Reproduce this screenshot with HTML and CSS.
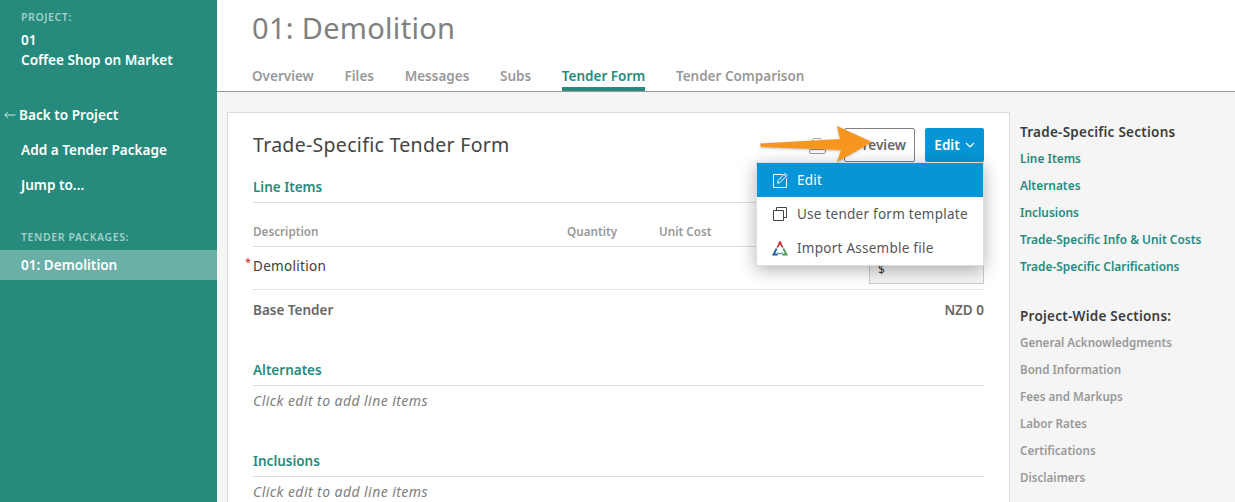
FILE: index.html
```html
<!DOCTYPE html>
<html lang="en">
<head>
<meta charset="utf-8">
<title>Tender Form</title>
<link rel="stylesheet" href="styles.css">
</head>
<body>
<div class="app">
  <aside class="sidebar">
    <div class="side-label first">PROJECT:</div>
    <div class="project">01<br>Coffee Shop on Market</div>
    <nav class="side-nav">
      <a class="back"><svg class="back-ico" width="12" height="8" viewBox="0 0 12 8"><path d="M11.500 4H.8M4 .8.8 4 4 7.200" fill="none" stroke="#cfe5e1" stroke-width="1"/></svg>Back to Project</a>
      <a>Add a Tender Package</a>
      <a>Jump to...</a>
    </nav>
    <div class="side-label second">TENDER PACKAGES:</div>
    <div class="side-active">01: Demolition</div>
  </aside>
  <div class="main">
    <header class="header">
      <h1>01: Demolition</h1>
      <div class="tabs">
        <span>Overview</span><span>Files</span><span>Messages</span><span>Subs</span><span class="active">Tender Form</span><span>Tender Comparison</span>
      </div>
    </header>
    <div class="content">
      <section class="card">
        <div class="card-head">
          <h2>Trade-Specific Tender Form</h2>
          <div class="actions">
            <svg class="clip" width="17" height="16" viewBox="0 0 17 16"><path d="M3.500 1.500q0-1 1-1h7q1 0 1 1v10h-9z" fill="#fff" stroke="#aaa"/><rect x=".5" y="11.500" width="16" height="4" rx="1.500" fill="#fff" stroke="#999"/></svg>
            <button class="btn-outline">Preview</button>
            <button class="btn-primary">Edit<svg width="10" height="6" viewBox="0 0 10 6"><path d="M1 1l4 4 4-4" fill="none" stroke="#fff" stroke-width="1.100"/></svg></button>
          </div>
        </div>
        <h3 class="sec first-sec">Line Items</h3>
        <div class="thead"><span class="c-desc">Description</span><span class="c-qty">Quantity</span><span class="c-cost">Unit Cost</span></div>
        <div class="row-item"><span class="req">*</span>Demolition<span class="input">$</span></div>
        <div class="row-total"><span>Base Tender</span><span>NZD 0</span></div>
        <h3 class="sec alt">Alternates</h3>
        <p class="hint">Click edit to add line items</p>
        <h3 class="sec inc">Inclusions</h3>
        <p class="hint">Click edit to add line items</p>
      </section>
      <aside class="rail">
        <h4>Trade-Specific Sections</h4>
        <a>Line Items</a><a>Alternates</a><a>Inclusions</a><a>Trade-Specific Info &amp; Unit Costs</a><a>Trade-Specific Clarifications</a>
        <h4 class="second-h">Project-Wide Sections:</h4>
        <a class="mute">General Acknowledgments</a><a class="mute">Bond Information</a><a class="mute">Fees and Markups</a><a class="mute">Labor Rates</a><a class="mute">Certifications</a><a class="mute">Disclaimers</a>
      </aside>
    </div>
  </div>
</div>
<div class="menu">
  <div class="menu-item on"><svg width="16" height="16" viewBox="0 0 16 16"><path d="M10.500 2.500H1.500v13h13V6.500" fill="none" stroke="#fff"/><path d="M5.500 11.200l.7-2.800L13 1.300l2 2-6.800 7.100zM11.800 2.600l2 2" fill="none" stroke="#fff"/></svg>Edit</div>
  <div class="menu-item"><svg width="16" height="16" viewBox="0 0 16 16"><path d="M1.500 4.500h10v10h-10z" fill="none" stroke="#444"/><path d="M4.500 4.500v-3h10v10h-3" fill="none" stroke="#444"/></svg>Use tender form template</div>
  <div class="menu-item"><svg width="16" height="16" viewBox="0 0 16 16"><path d="M5.100 7.500 8 3l2.900 4.500" fill="none" stroke="#c9373f" stroke-width="1.600"/><circle cx="8" cy="3" r="1.700" fill="#c9373f"/><path d="M11.300 8.500 14.500 14.500H10.200" fill="none" stroke="#4c9a5a" stroke-width="1.800"/><path d="M4.700 8.500 1.500 14.500H5.800" fill="none" stroke="#1f5f9e" stroke-width="1.800"/><path d="M5.400 12.500a3.300 3.300 0 0 0 5.200 0" fill="none" stroke="#1c6f80" stroke-width="1"/></svg>Import Assemble file</div>
</div>
<svg class="arrow" width="113" height="40" viewBox="0 0 113 40"><path d="M0 19.500 80 15 77 2 112 18 77 38 81 26 1 23z" fill="#f7961e"/></svg>
</body>
</html>
```
FILE: styles.css
```css
* { box-sizing: border-box; }
html, body { margin: 0; height: 100%; overflow: hidden; }
body { font-family: "Noto Sans", "Open Sans", sans-serif; color: #3c3c3c; background: #f5f5f5; }
h1, h2, h3, h4, p { margin: 0; font-weight: 600; }
.app { display: flex; height: 502px; }

.sidebar { width: 217px; flex: none; background: #268b7d; color: #fff; font-weight: 600; font-size: 13.600px; }
.side-label { color: #a3cfc8; font-size: 10.500px; letter-spacing: .6px; line-height: 14px; padding-left: 21px; }
.side-label.first { margin-top: 10px; }
.side-label.second { margin-top: 28px; }
.project { padding-left: 21px; margin-top: 6px; line-height: 20px; }
.side-nav { display: flex; flex-direction: column; margin-top: 27px; }
.side-nav a { line-height: 35px; padding-left: 21px; }
.side-nav a.back { padding-left: 4px; display: flex; align-items: center; gap: 3px; }
.side-active { margin-top: 6px; height: 30px; line-height: 30px; padding-left: 21px; background: #6bb0a7; }

.main { flex: 1; min-width: 0; display: flex; flex-direction: column; }
.header { height: 92px; background: #fff; border-bottom: 1px solid #999; padding: 8px 0 0 35px; }
h1 { font-size: 29px; font-weight: 400; color: #808080; line-height: 40px; letter-spacing: .3px; }
.tabs { display: flex; gap: 30.700px; margin-top: 9px; font-size: 13.500px; font-weight: 600; color: #999; }
.tabs span { height: 34px; padding-top: 7px; line-height: 24px; }
.tabs .active { color: #268b7d; border-bottom: 4px solid #268b7d; }

.content { flex: 1; display: flex; padding: 20px 0 0 10px; min-height: 0; }
.card { width: 783px; flex: none; height: 400px; background: #fff; border: 1px solid #ddd; border-bottom: 0; padding: 0 25px; overflow: visible; }
.card-head { display: flex; justify-content: space-between; align-items: center; height: 64px; padding-bottom: 1px; }
h2 { font-size: 19.500px; font-weight: 400; color: #444; letter-spacing: .3px; }
.actions { display: flex; align-items: center; }
.clip { margin-right: 18px; margin-top: 2px; }
.btn-outline, .btn-primary { font-family: inherit; font-size: 13.500px; font-weight: 600; height: 34px; border-radius: 2px; padding: 0; }
.btn-outline { width: 71px; background: #fff; border: 1px solid #808080; color: #666; text-align: right; padding-right: 8px; margin-right: 10px; }
.btn-primary { width: 59px; background: #0696d7; border: 0; color: #fff; display: flex; align-items: center; justify-content: center; gap: 5px; }

.sec { font-size: 13.500px; color: #268b7d; font-weight: 600; border-bottom: 1px solid #ddd; height: 26px; line-height: 20px; }
.alt { margin-top: 30px; height: 26px; }
.inc { margin-top: 35px; height: 26px; }
.thead { height: 44px; border-bottom: 1px solid #ddd; display: flex; align-items: flex-end; padding-bottom: 7px; font-size: 11.700px; font-weight: 600; color: #999; line-height: 16px; }
.c-desc { width: 314px; }
.c-qty { width: 92px; }
.row-item { position: relative; height: 43px; border-bottom: 1px dotted #ccc; display: flex; align-items: center; padding-bottom: 4px; font-size: 13.500px; letter-spacing: .3px; color: #3c3c3c; }
.req { position: absolute; left: -8px; top: 8px; color: #c4262e; font-size: 11px; line-height: 14px; }
.input { position: absolute; right: 0; bottom: 5px; width: 115px; height: 22px; border: 1px solid #ccc; background: #f5f5f5; font-size: 12px; padding-left: 8px; line-height: 14px; }
.row-total { display: flex; justify-content: space-between; height: 40px; line-height: 40px; font-size: 13.500px; font-weight: 600; color: #666; }
.hint { font-size: 14px; letter-spacing: .43px; font-style: italic; font-weight: 400; color: #808080; line-height: 30px; }

.rail { padding: 10px 0 0 10px; flex: 1; display: flex; flex-direction: column; font-size: 11.900px; font-weight: 600; min-width: 0; }
.rail h4 { font-size: 13.500px; letter-spacing: .25px; color: #3c3c3c; line-height: 20px; margin-bottom: 3px; }
.rail .second-h { margin-top: 26px; }
.rail a { color: #268b7d; line-height: 27px; white-space: nowrap; }
.rail a.mute { color: #999; font-size: 11.600px; }

.menu { position: absolute; left: 756px; top: 162px; width: 228px; background: #fff; border: 1px solid #ddd; box-shadow: 0 4px 16px rgba(0,0,0,.3); font-size: 13.500px; color: #555; }
.menu-item { height: 34px; display: flex; align-items: center; gap: 9px; padding-left: 15px; letter-spacing: .25px; }
.menu-item.on { background: #0696d7; color: #fff; }
.arrow { position: absolute; left: 760px; top: 124px; filter: drop-shadow(0 1px 1px rgba(0,0,0,.25)); }
```
